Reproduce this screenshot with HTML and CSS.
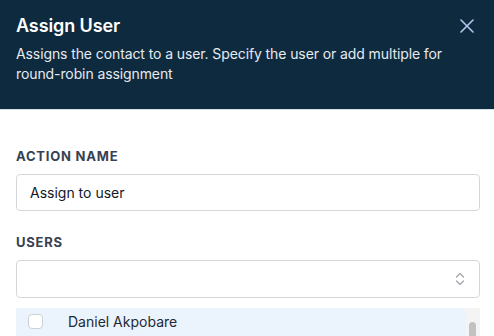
FILE: index.html
```html
<!DOCTYPE html>
<html>
<head>
<meta charset="utf-8">
<link rel="stylesheet" href="styles.css">
</head>
<body>
<div class="panel">
  <header class="header">
    <div class="header-top">
      <h1 class="title">Assign User</h1>
      <button class="close" aria-label="Close">
        <svg width="14" height="14" viewBox="0 0 14 14"><path d="M1 1L13 13M13 1L1 13" stroke="#b7c6ee" stroke-width="1.6" stroke-linecap="round"/></svg>
      </button>
    </div>
    <p class="desc">Assigns the contact to a user. Specify the user or add multiple for round-robin assignment</p>
  </header>
  <main class="content">
    <div class="field">
      <label class="label">Action Name</label>
      <div class="input">Assign to user</div>
    </div>
    <div class="field users">
      <label class="label">Users</label>
      <div class="input select">
        <svg width="10" height="16" viewBox="0 0 10 16"><path d="M1.5 6L5 2.5L8.5 6M1.5 10L5 13.5L8.5 10" fill="none" stroke="#a0a5ad" stroke-width="1.2" stroke-linecap="round" stroke-linejoin="round"/></svg>
      </div>
      <div class="dropdown">
        <div class="options">
          <div class="option">
            <span class="checkbox"></span>
            <span class="name">Daniel Akpobare</span>
          </div>
        </div>
        <div class="scrollbar"><div class="thumb"></div></div>
      </div>
    </div>
  </main>
</div>
</body>
</html>
```
FILE: styles.css
```css
* { box-sizing: border-box; }
html, body { margin: 0; padding: 0; background: #fff; }
body {
  font-family: Inter, "Noto Sans", "Liberation Sans", sans-serif;
  width: 494px;
  height: 336px;
  overflow: hidden;
}
.header {
  background: #0e2a3f;
  padding: 12px 16px 24px 16px;
  border-bottom: 1px solid #d6e1ea;
  height: 110px;
}
.header-top {
  display: flex;
  justify-content: space-between;
  align-items: center;
}
.title {
  margin: 0;
  font-size: 18px;
  line-height: 28px;
  font-weight: 600;
  color: #fff;
  letter-spacing: -0.1px;
}
.close {
  background: none;
  border: 0;
  padding: 0;
  width: 14px;
  height: 14px;
  margin-right: 4px;
  display: flex;
}
.desc {
  margin: 4px 0 0 0;
  font-size: 14px;
  line-height: 20px;
  color: #e6ebf0;
  letter-spacing: -0.1px;
}
.content {
  padding: 36px 14px 0 16px;
}
.field { display: flex; flex-direction: column; }
.users { margin-top: 21px; }
.label {
  font-size: 13px;
  line-height: 20px;
  font-weight: 700;
  text-transform: uppercase;
  letter-spacing: 0.06em;
  color: #374151;
}
.input {
  margin-top: 8px;
  height: 37px;
  border: 1px solid #d4d6da;
  border-radius: 4px;
  padding: 0 13px;
  display: flex;
  align-items: center;
  font-size: 14px;
  color: #111827;
}
.select {
  height: 38px;
  justify-content: flex-end;
  padding-right: 14px;
}
.dropdown {
  margin-top: 10px;
  display: flex;
  height: 40px;
}
.options {
  flex: 1;
  background: #ebf4fc;
}
.option {
  height: 26px;
  display: flex;
  align-items: center;
  padding-left: 12px;
}
.checkbox {
  width: 15px;
  height: 15px;
  border: 1px solid #cdd1d6;
  border-radius: 4px;
  background: #fff;
}
.name {
  margin-left: 25px;
  font-size: 14px;
  color: #1f2937;
}
.scrollbar {
  width: 15px;
  background: #f4f4f4;
  display: flex;
  justify-content: center;
  padding-top: 14px;
}
.thumb {
  width: 7px;
  height: 30px;
  border-radius: 4px;
  background: #c2c2c2;
}
```
